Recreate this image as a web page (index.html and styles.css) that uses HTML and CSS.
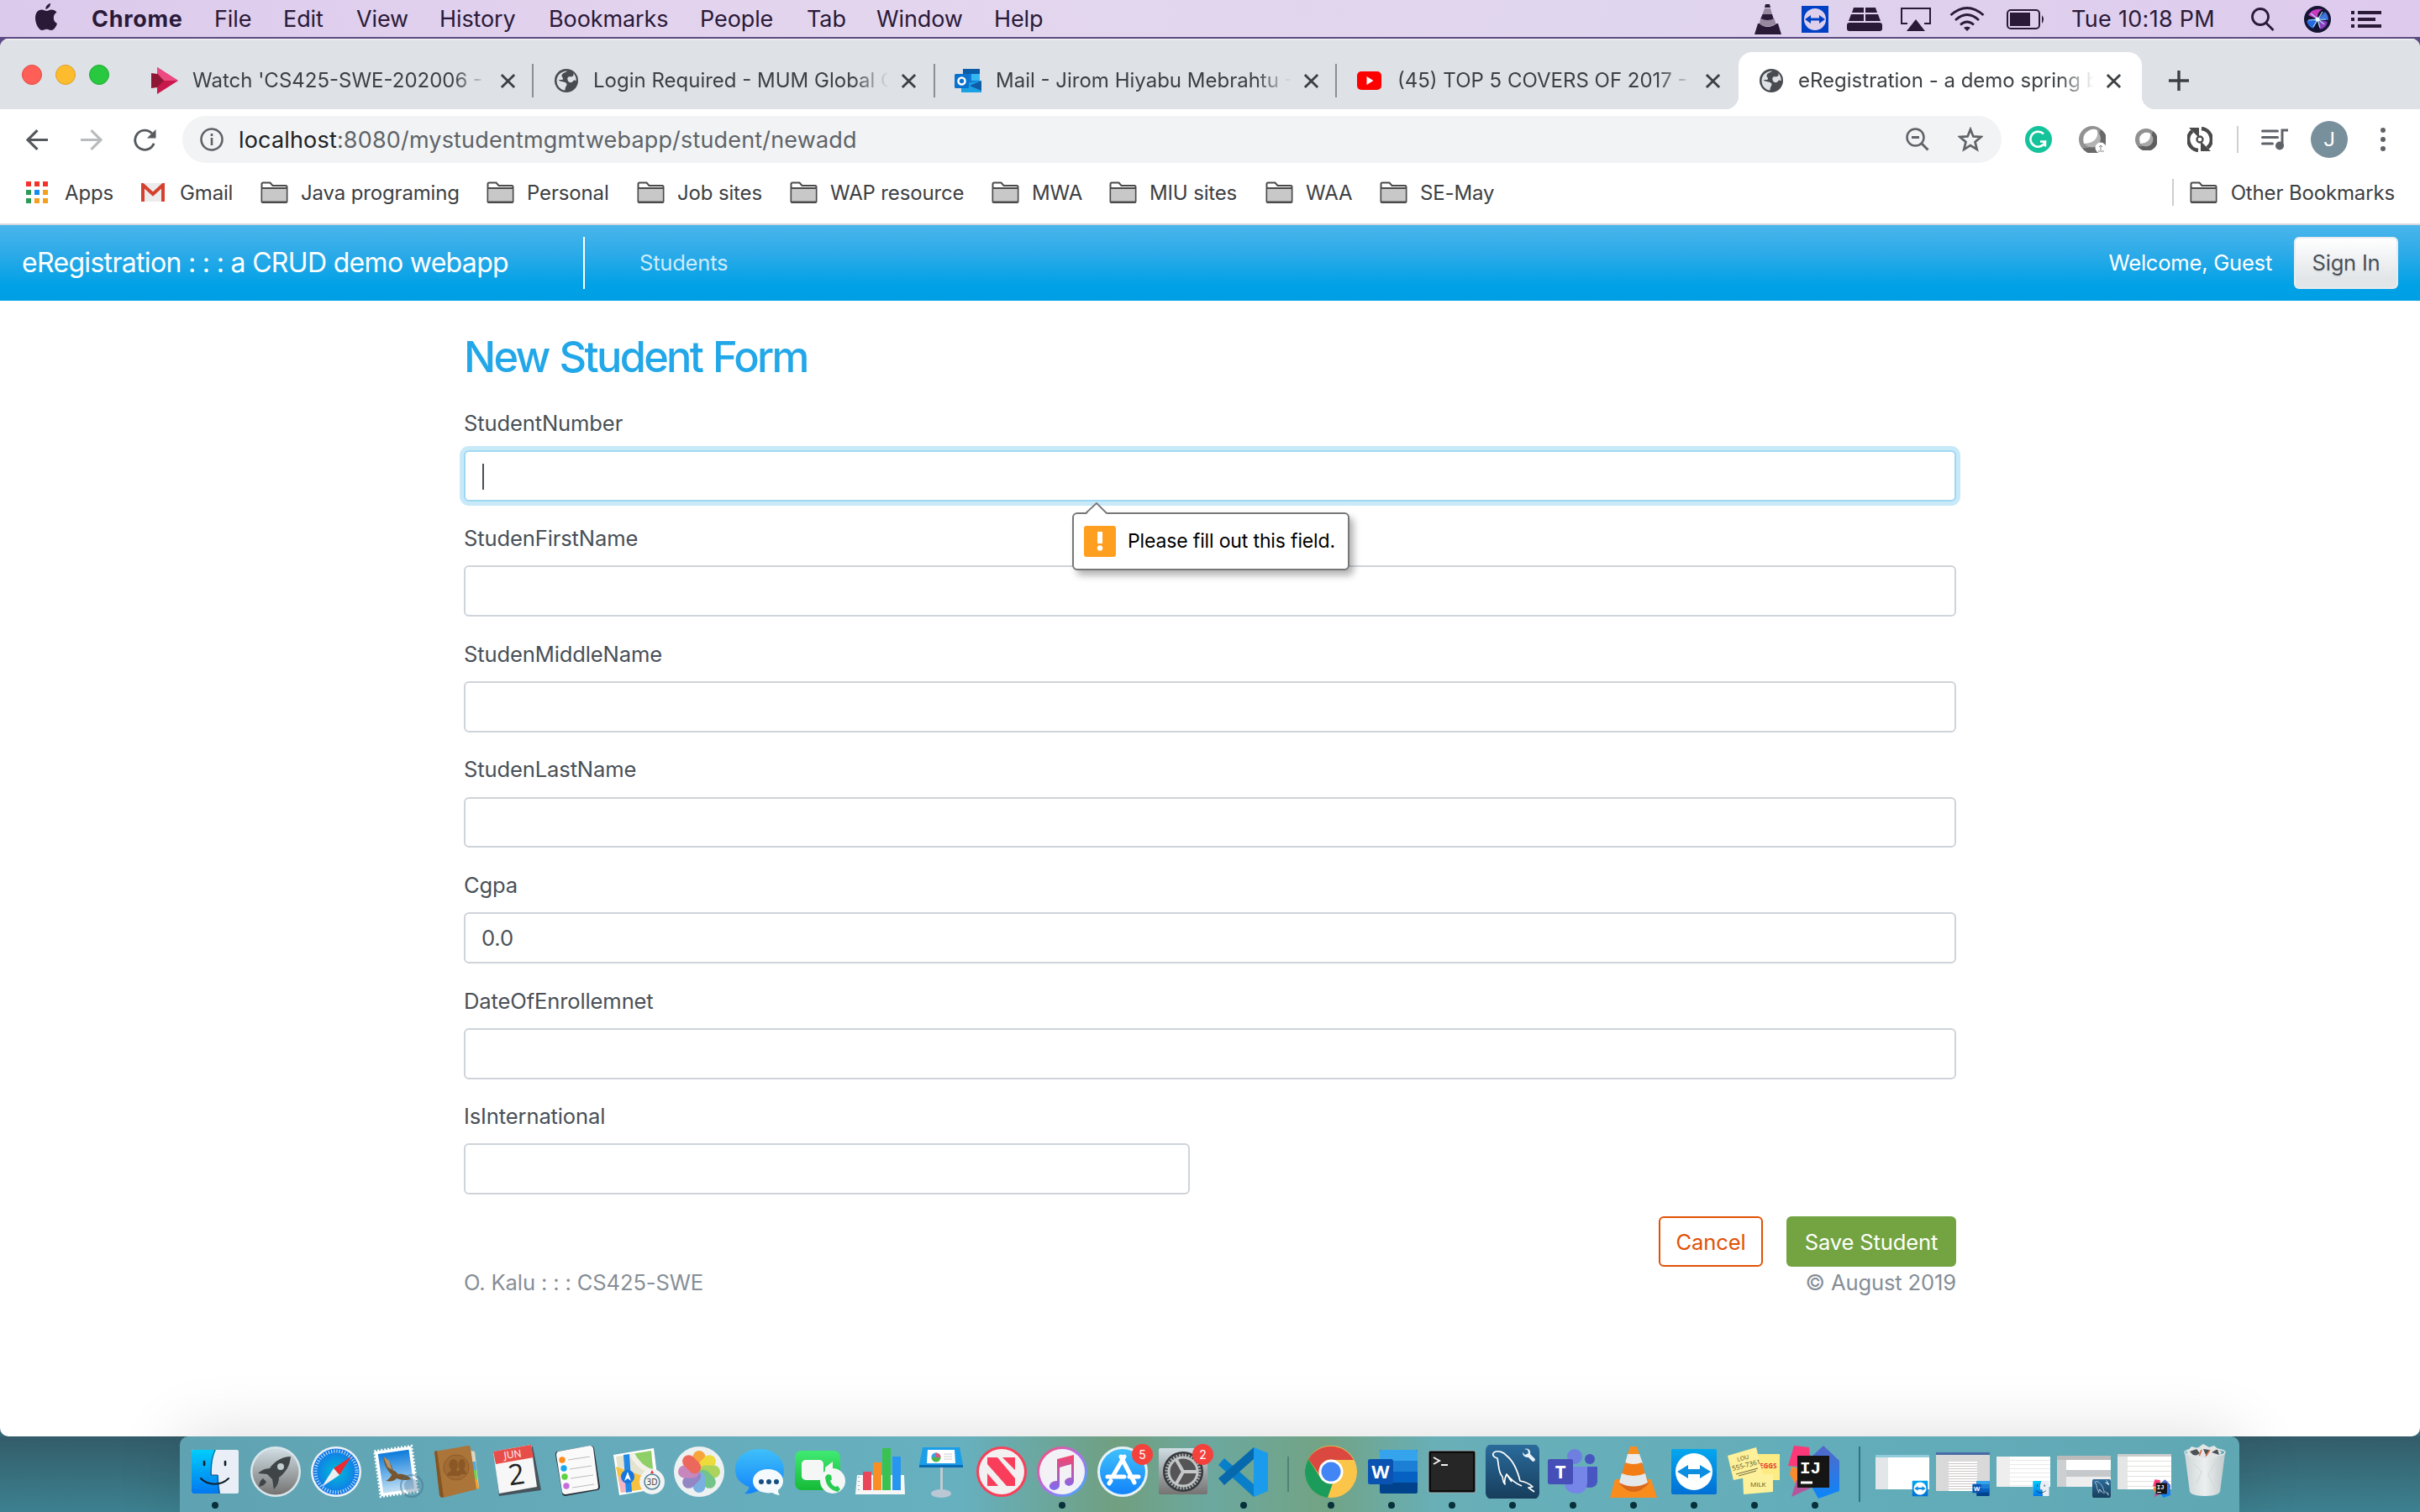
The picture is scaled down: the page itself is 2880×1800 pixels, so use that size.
FILE: index.html
```html
<!DOCTYPE html>
<html lang="en">
<head>
<meta charset="utf-8">
<title>eRegistration - a demo spring boot webapp</title>
<link rel="stylesheet" href="styles.css">
</head>
<body>
<svg class="sprite" aria-hidden="true">
  <symbol id="folder" viewBox="0 0 33 26"><path d="M1.500 24V3q0-1.500 1.500-1.500h8.500l3 3.500H30q1.500 0 1.500 1.500V24q0 1-1 1H2.500q-1 0-1-1z" fill="#fff" stroke="#4a4a4a" stroke-width="2"/><path d="M2.500 8.500h28V24h-28z" fill="#c8c8c8"/><path d="M2 8h29M2 24.500h29" stroke="#4a4a4a" stroke-width="2"/></symbol>
  <symbol id="globe" viewBox="0 0 28 28"><circle cx="14" cy="14" r="14" fill="#484c50"/><path d="M15 2.500c-2 2-6 2-6.500 5.500-.3 2 2 2 1.500 4-.5 1.500-3 1-5.500 1 2.500 2.500 6 2 8 3 2.500 1.200 2.500 3 1 5-1 1.500-1 3-1 4.500C7 25 2.500 20.500 2.500 14S8 2.500 15 2.500zM16.500 9.500c2-1 4 .5 5.500-1 1-1 .5-2.500 0-3.500 2.500 2 4 5.500 3.700 9.500-1.200-1.500-3-1.500-3.700 0-1 2-3.500 2-5 1s-2.500-4.800-.5-6z" fill="#dee1e6"/></symbol>
  <symbol id="close" viewBox="0 0 20 20"><path d="M2 2l16 16M18 2L2 18" stroke="#3c4043" stroke-width="3"/></symbol>
  <symbol id="finder" viewBox="0 0 64 64"><rect x="4" y="6" width="56" height="52" rx="2" fill="#e9eef7"/><path d="M6 6h27c-4 8-5 17-5 30h8c0 8 1 15 2 22H6q-2 0-2-2V8q0-2 2-2z" fill="url(#gFinder)"/><path d="M32 6c-4 9-5 18-5 30h8c0 8 1 15 2 22" fill="none" stroke="#1e4d77" stroke-width="1"/><path d="M19 20v4M44 20v4" stroke="#10202c" stroke-width="2.600" stroke-linecap="round"/><path d="M15 40c9 9 24 9 33 0" fill="none" stroke="#10202c" stroke-width="2" stroke-linecap="round"/></symbol>
  <symbol id="word" viewBox="0 0 64 64"><rect x="18" y="6" width="45" height="52" rx="2" fill="#00438c"/><path d="M18 8q0-2 2-2h41q2 0 2 2v11H18z" fill="#35a4ec"/><path d="M18 19h45v13H18z" fill="#1b7fd6"/><path d="M18 32h45v13H18z" fill="#0561c2"/><rect x="4" y="17" width="30" height="30" rx="2.500" fill="#0a53b3"/><text x="19" y="40" class="glyph" font-size="22" text-anchor="middle">W</text></symbol>
  <symbol id="viewer" viewBox="0 0 64 64"><rect x="5" y="5" width="54" height="54" rx="2" fill="url(#gTv)"/><circle cx="32" cy="32" r="22" fill="#fff"/><path d="M12 32l13-8v5h14v-5l13 8-13 8v-5H25v5z" fill="#0d8ee0"/></symbol>
  <symbol id="mysql" viewBox="0 0 64 64"><rect x="0" y="-1" width="64" height="66" rx="8" fill="url(#gSql)"/><path d="M10 9c5-3 12 0 15 4 9 7 13 18 16 30 6 1 11 3 15 7l-5 1 7 5M10 9c-3 3 0 6 4 7 2 9 1 17 6 22 1 3 0 6 3 9-1-4 0-8 2-12 4 5 10 11 18 14M25 35l6 9" fill="none" stroke="#fff" stroke-width="1.700" stroke-linejoin="round"/><path d="M46 5l4 1 1 4-4 2-3-3c0 5 4 6 7 6l5 5q3 0 3-3l-6-6c1-4-2-8-7-6z" fill="#e8f2f8"/></symbol>
  <symbol id="idea" viewBox="0 0 64 64"><path d="M7 1l18 2 2 24-27-2z" fill="#fb3878"/><path d="M4 26l18 5-12 18-8-14z" fill="#f88b2d"/><path d="M10 42l20 8-26 12z" fill="#b5569b"/><path d="M28 14L42 1l19 18v36L36 64l-8-14z" fill="url(#gIdea)"/><rect x="11" y="13" width="38" height="38" fill="#151515"/><text x="14" y="34" class="glyph mono" font-size="21">IJ</text><path d="M15 45h14" stroke="#fff" stroke-width="3"/></symbol>
  <defs>
    <linearGradient id="gFinder" x1="0" y1="0" x2="0" y2="1"><stop offset="0" stop-color="#00cdfb"/><stop offset="1" stop-color="#0078f0"/></linearGradient>
    <linearGradient id="gTv" x1="0" y1="0" x2="0" y2="1"><stop offset="0" stop-color="#04a7ee"/><stop offset="1" stop-color="#006fd6"/></linearGradient>
    <linearGradient id="gSql" x1="0" y1="0" x2="0" y2="1"><stop offset="0" stop-color="#2a6c9c"/><stop offset="1" stop-color="#173d5b"/></linearGradient>
    <linearGradient id="gIdea" x1="0" y1="0" x2="0" y2="1"><stop offset="0" stop-color="#5568c8"/><stop offset="1" stop-color="#0a86fb"/></linearGradient>
    <linearGradient id="gSilver" x1="0" y1="0" x2="0" y2="1"><stop offset="0" stop-color="#cfdde3"/><stop offset="1" stop-color="#757372"/></linearGradient>
    <linearGradient id="gSky" x1="0" y1="0" x2="0" y2="1"><stop offset="0" stop-color="#0c7bdc"/><stop offset="1" stop-color="#c2e0f3"/></linearGradient>
    <radialGradient id="gSafari"><stop offset="0" stop-color="#00bdd8"/><stop offset="1" stop-color="#1374e8"/></radialGradient>
    <linearGradient id="gBlue" x1="0" y1="0" x2="0" y2="1"><stop offset="0" stop-color="#3fc0fa"/><stop offset="1" stop-color="#1283fb"/></linearGradient>
    <linearGradient id="gGreen" x1="0" y1="0" x2="0" y2="1"><stop offset="0" stop-color="#40ea72"/><stop offset="1" stop-color="#16ba38"/></linearGradient>
    <linearGradient id="gMusic" x1="0" y1="0" x2="1" y2="1"><stop offset="0" stop-color="#fc4e63"/><stop offset=".5" stop-color="#b66bf0"/><stop offset="1" stop-color="#2cb8fb"/></linearGradient>
    <linearGradient id="gNote" x1="0" y1="0" x2="0" y2="1"><stop offset="0" stop-color="#f8446a"/><stop offset="1" stop-color="#7c6cf3"/></linearGradient>
    <linearGradient id="gTrash" x1="0" y1="0" x2="1" y2="0"><stop offset="0" stop-color="#d3d7d8"/><stop offset=".5" stop-color="#f1f2f2"/><stop offset="1" stop-color="#c6cbcc"/></linearGradient>
  </defs>
</svg>

<header class="menubar">
  <nav class="menus">
    <svg class="apple" viewBox="0 0 26 32"><path d="M18 0c.3 3-2.200 6.600-5.600 6.900C12 4 14.700.500 18 0zM21.800 17c0-3 1.500-5 3.700-6.300-1.500-2.200-3.800-3.200-6.200-3.200-2.600 0-4 1.400-5.800 1.400-1.900 0-3.500-1.400-6-1.400C3.300 7.500 0 11 0 17.500 0 24.500 4.500 32 8 32c2 0 3-1.300 5.500-1.300S17 32 19 32c3.200 0 6-4.500 7-8-2.800-1.200-4.200-4-4.200-7z"/></svg>
    <b class="t-app">Chrome</b><span>File</span><span>Edit</span><span>View</span><span>History</span><span>Bookmarks</span><span>People</span><span>Tab</span><span>Window</span><span>Help</span>
  </nav>
  <div class="status">
    <svg width="32" height="36" viewBox="0 0 32 36"><path d="M13 0h5l1 4h-7z"/><path d="M12 5h7l2 7H9.500z" fill="#97879f"/><path d="M9.500 12h11.500l2 6q-7.500 4-16 0z"/><path d="M7.500 17q8 4 16 0l2 6.500q-10 6-20 0z" fill="#97879f"/><path d="M4 23h1.500q10 8 21 0H28l4 13H0z"/></svg>
    <svg width="32" height="32" viewBox="0 0 32 32"><path d="M0 0h32v32H0z" fill="#0040c4"/><circle cx="16" cy="16" r="13" fill="#ded0ec"/><path d="M4 16l7-5v3.500h10V11l7 5-7 5v-3.500H11V21z" fill="#0040c4"/></svg>
    <svg width="42" height="28" viewBox="0 0 42 28"><path d="M8 0h12v6H6zM22 0h12l2 6H22zM5 8h15v8H2zM22 8h15l3 8H22z"/><rect y="18" width="42" height="10" rx="3"/></svg>
    <svg width="36" height="28" viewBox="0 0 36 28"><path d="M8 19H1V1h34v18h-7" fill="none" stroke="#2a1a38" stroke-width="2"/><path d="M18 14l11 14H7z"/></svg>
    <svg width="42" height="30" viewBox="0 0 42 30" class="waves"><path d="M1.500 10q19.500-17 39 0M7 16q14-13 28 0M13 21.500q8-7 16 0"/><path d="M17 25q4-2.500 8 0l-4 4z" class="solid"/></svg>
    <svg width="46" height="24" viewBox="0 0 46 24"><rect x="1" y="1" width="38" height="22" rx="4" fill="none" stroke="#2a1a38" stroke-width="2"/><path d="M4 4h24v16H4zM42 7q4 5 0 10z"/></svg>
    <span class="clock">Tue 10:18 PM</span>
    <svg width="30" height="28" viewBox="0 0 30 28" class="waves"><circle cx="12" cy="11" r="9.500"/><path d="M18.500 18l9 9"/></svg>
    <svg width="32" height="32" viewBox="0 0 32 32"><circle cx="16" cy="16" r="16" fill="#141433"/><path d="M5 11q5-9 17-7-7 3-6 12-7-3-11-5z" fill="#c63bc0"/><path d="M3 18q8-4 13-2l-5 11q-6-2-8-9z" fill="#2667df"/><path d="M16 16l9-9q4 4 4 10z" fill="#3f73dd"/><path d="M16 16l12 3q-2 8-9 9z" fill="#8d3bc1"/><path d="M8 9l16 13M22 7L11 25M5 17l21-1M16 16l3 10" stroke="#a5e3f2" stroke-width="1.200"/><circle cx="16" cy="16" r="2.500" fill="#e6fbff"/></svg>
    <svg width="36" height="20" viewBox="0 0 36 20"><path d="M0 0h4v4H0zM8 0h28v4H8zM0 8h4v4H0zM8 8h21v4H8zM0 16h4v4H0zM8 16h28v4H8z"/></svg>
  </div>
</header>

<main class="window">
  <div class="tabstrip">
    <div class="lights"><i class="red"></i><i class="amber"></i><i class="green"></i></div>
    <div class="tab">
      <svg viewBox="0 0 32 32"><path d="M7 0l25 16L7 32z" fill="#c9194c"/><path d="M7 0l25 16H15L7 7z" fill="#ec4a80"/><path d="M0 7l7 1 8 8-8 8-7 1z" fill="#8d1735"/></svg>
      <span class="title">Watch 'CS425-SWE-202006 - </span><svg class="x"><use href="#close"/></svg>
    </div>
    <div class="tab">
      <svg class="globe"><use href="#globe"/></svg>
      <span class="title">Login Required - MUM Global Co</span><svg class="x"><use href="#close"/></svg>
    </div>
    <div class="tab">
      <svg viewBox="0 0 32 32"><path d="M10 2h20v28H10z" fill="#0f78d4"/><path d="M10 2h20v6H10z" fill="#0a5ba8"/><path d="M20 8h10v8H20z" fill="#35b8f1"/><path d="M8 20l24-4v14H8z" fill="#1ba0e4"/><path d="M18 22l14-6v12z" fill="#0f5ca5"/><rect y="8" width="17" height="17" rx="1.500" fill="#0a72cd"/><circle cx="8.500" cy="16.500" r="4" fill="none" stroke="#fff" stroke-width="2.500"/></svg>
      <span class="title">Mail - Jirom Hiyabu Mebrahtu - O</span><svg class="x"><use href="#close"/></svg>
    </div>
    <div class="tab">
      <svg viewBox="0 0 32 32"><rect x="1" y="5" width="29" height="22" rx="5" fill="#f00"/><path d="M12.500 11l8 5-8 5z" fill="#fff"/></svg>
      <span class="title">(45) TOP 5 COVERS OF 2017 - Y</span><svg class="x"><use href="#close"/></svg>
    </div>
    <div class="tab active">
      <svg class="globe"><use href="#globe"/></svg>
      <span class="title">eRegistration - a demo spring bo</span><svg class="x"><use href="#close"/></svg>
    </div>
    <svg class="plus" viewBox="0 0 24 24"><path d="M12 0v24M0 12h24" stroke="#3c4043" stroke-width="3.400"/></svg>
  </div>

  <div class="toolbar">
    <svg class="nav" viewBox="0 0 26 26"><path d="M25 13H3M13 2L2 13l11 11" fill="none" stroke="#55595d" stroke-width="3"/></svg>
    <svg class="nav" viewBox="0 0 26 26"><path d="M1 13h22M13 2l11 11-11 11" fill="none" stroke="#b9bbbd" stroke-width="3"/></svg>
    <svg class="nav" viewBox="0 0 28 28"><path d="M25 18.500A12 12 0 1 1 22.500 6" fill="none" stroke="#55595d" stroke-width="3"/><path d="M27.500 1v11h-11z" fill="#55595d"/></svg>
    <div class="omnibox">
      <svg width="28" height="28" viewBox="0 0 28 28"><circle cx="14" cy="14" r="12.500" fill="none" stroke="#5f6368" stroke-width="2.600"/><path d="M14 12v9M14 7v3" stroke="#5f6368" stroke-width="2.600"/></svg>
      <span class="url"><b>localhost</b>:8080/mystudentmgmtwebapp/student/newadd</span>
      <svg width="28" height="28" viewBox="0 0 28 28"><circle cx="11.500" cy="11.500" r="10" fill="none" stroke="#606468" stroke-width="2.500"/><path d="M7 11.500h9M19 19l7.500 7.500" stroke="#606468" stroke-width="3"/></svg>
      <svg class="star" width="30" height="30" viewBox="0 0 30 30"><path d="M15 3l3.400 8.400 9.100.6-7 5.900 2.200 9L15 22l-7.700 4.900 2.200-9-7-5.900 9.100-.6z" fill="none" stroke="#606468" stroke-width="2.700"/></svg>
    </div>
    <div class="extensions">
      <svg width="32" height="32" viewBox="0 0 32 32"><circle cx="16" cy="16" r="16" fill="#15c39a"/><path d="M22 9.500a9 9 0 1 0 2 9h-6m6 0v6" fill="none" stroke="#fff" stroke-width="2.500"/></svg>
      <svg width="32" height="32" viewBox="0 0 32 32"><circle cx="16" cy="16" r="16" fill="#929292"/><path d="M26 4a16 16 0 1 1-22 22q15 3 22-22z" fill="#696969"/><circle cx="15.500" cy="15" r="10.500" fill="#b4b4b4"/><path d="M22 5q2 15-16 16Q3 9 15 4q4-1 7 1z" fill="#fff"/><circle cx="26" cy="26" r="6.500" fill="#fff"/><path d="M26 29v-6m-2 2l2-2 2 2M23 30h7" fill="none" stroke="#888"/></svg>
      <svg width="26" height="26" viewBox="0 0 26 26"><circle cx="13" cy="13" r="13" fill="#909090"/><path d="M21 3A13 13 0 1 1 3 21q14 3 18-18z" fill="#5e5e5e"/><circle cx="13" cy="13" r="8.500" fill="#a8a8a8"/><path d="M18 6q1 11-12 12Q3 8 11 5q4-1 7 1z" fill="#fff"/></svg>
      <svg width="30" height="30" viewBox="0 0 30 30"><path d="M13 28A13 13 0 0 1 6 5M17 2a13 13 0 0 1 7 23" fill="none" stroke="#4a4a4a" stroke-width="4.500"/><path d="M2 1h12v12zM28 29H16V17z" fill="#4a4a4a"/><circle cx="15" cy="15" r="3.500" fill="none" stroke="#4a4a4a" stroke-width="2.300"/></svg>
      <i class="rule"></i>
      <svg width="33" height="26" viewBox="0 0 33 26"><path d="M1.500 3h18M1.500 10.500h18M1.500 18h12" stroke="#5f6368" stroke-width="3" stroke-linecap="round"/><path d="M25 20V2h7" fill="none" stroke="#5f6368" stroke-width="3"/><circle cx="22" cy="20.500" r="5" fill="#5f6368"/></svg>
      <span class="avatar">J</span>
      <svg width="6" height="28" viewBox="0 0 6 28" fill="#5f6368"><circle cx="3" cy="3" r="3"/><circle cx="3" cy="14" r="3"/><circle cx="3" cy="25" r="3"/></svg>
    </div>
  </div>

  <div class="bookmarks">
    <a><svg width="26" height="26" viewBox="0 0 26 26"><path d="M0 0h6v6H0zM10 0h6v6h-6zM20 0h6v6h-6z" fill="#f4322c"/><path d="M0 10h6v6H0zM0 20h6v6H0z" fill="#2e9a58"/><path d="M10 10h6v6h-6z" fill="#1a8cf0"/><path d="M20 10h6v6h-6zM10 20h6v6h-6zM20 20h6v6h-6z" fill="#f49f1e"/></svg><span>Apps</span></a>
    <a><svg width="28" height="22" viewBox="0 0 28 22"><path d="M0 0h28v22H0z" fill="#ececec"/><path d="M2 22V2l12 11L26 2v20" fill="none" stroke="#d5402f" stroke-width="4"/></svg><span>Gmail</span></a>
    <a><svg class="fold"><use href="#folder"/></svg><span>Java programing</span></a>
    <a><svg class="fold"><use href="#folder"/></svg><span>Personal</span></a>
    <a><svg class="fold"><use href="#folder"/></svg><span>Job sites</span></a>
    <a><svg class="fold"><use href="#folder"/></svg><span>WAP resource</span></a>
    <a><svg class="fold"><use href="#folder"/></svg><span>MWA</span></a>
    <a><svg class="fold"><use href="#folder"/></svg><span>MIU sites</span></a>
    <a><svg class="fold"><use href="#folder"/></svg><span>WAA</span></a>
    <a><svg class="fold"><use href="#folder"/></svg><span>SE-May</span></a>
    <a class="other"><svg class="fold"><use href="#folder"/></svg><span>Other Bookmarks</span></a>
  </div>

  <div class="navbar">
    <a class="brand">eRegistration : : : a CRUD demo webapp</a>
    <i class="split"></i>
    <a class="link">Students</a>
    <span class="welcome">Welcome, Guest</span>
    <a class="signin">Sign In</a>
  </div>

  <div class="page">
    <h1>New Student Form</h1>
    <div class="group"><label>StudentNumber</label><div class="input focus"><i class="caret"></i>
      <div class="bubble"><svg class="tip" viewBox="0 0 28 15"><path d="M0 15L13 1l13 14z" fill="#fff"/><path d="M0 13L13 1l12 12" fill="none" stroke="#777" stroke-width="1.800"/></svg><svg width="38" height="37" viewBox="0 0 38 37"><rect width="38" height="37" rx="3" fill="#ff9f1f"/><path d="M19 7v14" stroke="#fff" stroke-width="6"/><circle cx="19" cy="26.500" r="3.200" fill="#fff"/></svg><span>Please fill out this field.</span></div></div></div>
    <div class="group"><label>StudenFirstName</label><div class="input"></div></div>
    <div class="group"><label>StudenMiddleName</label><div class="input"></div></div>
    <div class="group"><label>StudenLastName</label><div class="input"></div></div>
    <div class="group"><label>Cgpa</label><div class="input">0.0</div></div>
    <div class="group"><label>DateOfEnrollemnet</label><div class="input"></div></div>
    <div class="group"><label>IsInternational</label><div class="input half"></div></div>
    <div class="actions"><a class="cancel">Cancel</a><a class="save">Save Student</a></div>
    <footer><span>O. Kalu : : : CS425-SWE</span><span class="date">© August 2019</span></footer>
  </div>
</main>

<section class="desktop">
  <div class="dock">
    <div class="app run"><svg><use href="#finder"/></svg></div>
    <div class="app"><svg viewBox="0 0 64 64"><circle cx="32" cy="32" r="30" fill="#dbe7ec"/><circle cx="32" cy="32" r="27.500" fill="url(#gSilver)"/><path d="M50 14c-10 0-20 6-25 14-5 0-10 2-14 6l11 1 6 6c1 5 1 8 2 12 4-4 6-9 6-14 8-6 13-14 14-25zM17 40c-4 3-4 6-5 10 4-1 7-2 9-6z" fill="#3f4447"/><circle cx="38" cy="26" r="4" fill="#c3cdd0"/></svg></div>
    <div class="app"><svg viewBox="0 0 64 64"><circle cx="32" cy="32" r="30" fill="#eef3f6"/><circle cx="32" cy="32" r="27.500" fill="url(#gSafari)"/><circle cx="32" cy="32" r="24.500" fill="none" stroke="#d5ecf8" stroke-width="4" stroke-dasharray="1 2.200"/><path d="M50 14L29 28l7 8z" fill="#f02a2e"/><path d="M15 50l14-22 7 8z" fill="#eceef0"/></svg></div>
    <div class="app"><svg viewBox="0 0 64 64"><g transform="rotate(-8 32 32)"><rect x="9" y="4" width="45" height="55" fill="none" stroke="#fff" stroke-width="2.500" stroke-dasharray="2 2"/><rect x="9.500" y="4.500" width="44" height="54" fill="#fff"/><rect x="13" y="8" width="37" height="47" fill="url(#gSky)"/><path d="M19 12c5 4 8 10 9 18 3 1 4 3 5 5 6 0 12 3 15 8-6 1-12 0-17-3-4 3-9 3-13 1 4-1 6-4 8-6-5-6-8-14-7-23z" fill="#76552f"/><path d="M19 12l6 6 2 11-5-4z" fill="#b7946a"/></g><circle cx="50" cy="49" r="13" fill="none" stroke="#446e8b" stroke-width="2" opacity=".5"/><circle cx="50" cy="49" r="9" fill="#446e8b" opacity=".35"/></svg></div>
    <div class="app"><svg viewBox="0 0 64 64"><path d="M48 7l5 1 5 43-6 1z" fill="#ded6bf"/><path d="M49 20h5l1 10h-5z" fill="#4cabdc"/><path d="M50 30h5l1 11h-5z" fill="#6fd34a"/><path d="M51 41h5l2 11-6 1z" fill="#f0a42a"/><path d="M5 8l40-7q3 0 3 3l7 49-40 10q-3 0-3-3z" fill="#ab7439"/><path d="M5 8l3-1 8 55-2 1q-2 0-3-3z" fill="#845423"/><circle cx="31" cy="27" r="15" fill="#a16b33" stroke="#8d5b2a"/><path d="M20 37c0-4 4-5 5-7-5-5-2-13 3-13 4 0 7 8 3 13 1 2 5 3 5 7zM30 35c0-3 5-4 5-6-3-5-1-12 3-12 4 1 5 8 2 12 1 2 3 3 3 6z" fill="#8a5826"/></svg></div>
    <div class="app"><svg viewBox="0 0 64 64"><path d="M4 10l46-8 10 52-50 7z" fill="#46535b"/><path d="M3 8l45-8 7 50-45 8z" fill="#f7f7f7"/><path d="M3 8l45-8 3 15-45 8z" fill="#e84e49"/><g transform="rotate(-8 32 32)"><text x="29" y="15" class="glyph thin" font-size="12" text-anchor="middle">JUN</text><text x="30" y="47" class="thin" font-size="34" text-anchor="middle" fill="#222">2</text></g></svg></div>
    <div class="app"><svg viewBox="0 0 64 64"><path d="M7 8l40-7q3 0 4 3l7 46q0 3-3 4l-38 7q-4 0-4-4L5 12q0-4 2-4z" fill="#293136"/><path d="M8 8l38-7q3 0 4 3l6 46q0 3-3 3l-36 6q-3 0-4-3L6 12q0-3 2-4z" fill="#fafafa"/><path d="M20 18l26-4M22 29l26-4M23 40l27-4M25 51l26-4" stroke="#bbb"/><circle cx="13" cy="18" r="3.700" fill="#fb8c1c"/><circle cx="15" cy="28" r="3.700" fill="#16a9f2"/><circle cx="16" cy="38" r="3.700" fill="#5ed13f"/><circle cx="18" cy="49" r="3.700" fill="#c66ddb"/></svg></div>
    <div class="app"><svg viewBox="0 0 64 64"><path d="M2 12l48-8 6 48-47 8z" fill="#fff"/><path d="M5 14l42-7 5 43-41 7z" fill="#e4e3cf"/><path d="M23 11l24-4 2 24q-20-2-26-20z" fill="#8fcf68"/><path d="M5 26l35 12 4 14-33 5z" fill="#f9c140"/><path d="M8 37l12 4 3 14-12 2z" fill="#f3b4c5"/><path d="M14 12l7-1 3 45-7 1z" fill="#2389e7"/><path d="M24 11q10 18 25 21" fill="none" stroke="#f3f0e7" stroke-width="6"/><circle cx="19" cy="38" r="8" fill="#1476e0"/><path d="M19 32l4 11-4-3-4 3z" fill="#fff"/><circle cx="48" cy="44" r="15" fill="#f3f3f3"/><circle cx="48" cy="44" r="9" fill="none" stroke="#4b8396" stroke-width="1.500"/><path d="M48 30l-2 4h4z" fill="#e33"/><text x="48" y="48" font-size="10" class="thin" text-anchor="middle" fill="#333">3D</text></svg></div>
    <div class="app"><svg viewBox="0 0 64 64"><circle cx="32" cy="32" r="30" fill="#eef1f1"/><g opacity=".88"><rect x="24.500" y="7" width="15" height="25" rx="7.500" fill="#fa9a25"/><rect x="24.500" y="7" width="15" height="25" rx="7.500" fill="#efd923" transform="rotate(45 32 32)"/><rect x="24.500" y="7" width="15" height="25" rx="7.500" fill="#a4cf48" transform="rotate(90 32 32)"/><rect x="24.500" y="7" width="15" height="25" rx="7.500" fill="#62be79" transform="rotate(135 32 32)"/><rect x="24.500" y="7" width="15" height="25" rx="7.500" fill="#6aa8df" transform="rotate(180 32 32)"/><rect x="24.500" y="7" width="15" height="25" rx="7.500" fill="#8678bf" transform="rotate(225 32 32)"/><rect x="24.500" y="7" width="15" height="25" rx="7.500" fill="#c278b5" transform="rotate(270 32 32)"/><rect x="24.500" y="7" width="15" height="25" rx="7.500" fill="#ed5648" transform="rotate(315 32 32)"/></g></svg></div>
    <div class="app"><svg viewBox="0 0 64 64"><path d="M32 5c17 0 29 11 29 26S49 54 32 54c-6 3-12 5-18 4 4-3 6-6 5-8C9 46 3 40 3 30 3 15 15 5 32 5z" fill="url(#gBlue)"/><path d="M42 29c10 0 18 6 18 14 0 5-3 9-6 11 0 2 0 3 2 6-4 0-7-2-9-3-12 2-23-4-23-14 0-8 8-14 18-14z" fill="#f4fafd"/><g fill="#154f82"><circle cx="34" cy="44" r="3"/><circle cx="43" cy="44" r="3"/><circle cx="52" cy="44" r="3"/></g></svg></div>
    <div class="app"><svg viewBox="0 0 64 64"><rect x="2" y="7" width="54" height="47" rx="8" fill="url(#gGreen)"/><rect x="10" y="18" width="26" height="24" rx="5" fill="#f5f7f6"/><path d="M38 27l9-7v20l-9-6z" fill="#f5f7f6"/><circle cx="47" cy="43" r="15" fill="#f5f7f6"/><path d="M41 35l4 1 1 5-2 2q2 5 6 7l3-1 3 4-3 3q-14-3-15-18z" fill="#27cc50"/></svg></div>
    <div class="app"><svg viewBox="0 0 64 64"><path d="M4 36h56l1 23H2z" fill="#f7f7f7"/><path d="M6 38v18" stroke="#aaa" stroke-width="2" stroke-dasharray="1 4"/><path d="M11 32h10v22H11z" fill="#e94659"/><path d="M23 21h10v33H23z" fill="#f98e25"/><path d="M34 4h10v50H34z" fill="#3ac250"/><path d="M46 14h10v40H46z" fill="#2796f0"/></svg></div>
    <div class="app"><svg viewBox="0 0 64 64"><path d="M31 26h3v30h-3z" fill="#c2cbd1"/><ellipse cx="32" cy="58" rx="12" ry="5" fill="#b9c8d4"/><path d="M10 3h44l4 21H6z" fill="#1a9ee8"/><path d="M6 24h52v3H6z" fill="#0a6ab4"/><path d="M16 6h32l1 16H15z" fill="#fff"/><circle cx="26" cy="15" r="5.500" fill="#4db54c"/><path d="M26 9.500v5.500h-5.500a5.500 5.500 0 0 1 5.500-5.500z" fill="#38a2e6"/><path d="M26 15V9.500a5.500 5.500 0 0 1 5.500 5.500z" fill="#e05683"/><path d="M35 11h10M35 14h10M35 17h10" stroke="#ccc"/></svg></div>
    <div class="app"><svg viewBox="0 0 64 64"><circle cx="32" cy="32" r="30" fill="#f8405a"/><circle cx="32" cy="32" r="27" fill="#f2f0f1"/><path d="M15 15h12l21 25v9H38L15 23zM33 15h15v15zM15 34l13 15H15z" fill="#fa3d5b"/></svg></div>
    <div class="app run"><svg viewBox="0 0 64 64"><circle cx="32" cy="32" r="30" fill="url(#gMusic)"/><circle cx="32" cy="32" r="27" fill="#f2f1f5"/><path d="M26 17l20-5v31q0 5-6 6-5-1-5-5 1-5 8-5V23l-14 4v21q0 5-7 6-6-1-5-6 2-5 9-5z" fill="url(#gNote)"/></svg></div>
    <div class="app"><svg viewBox="0 0 64 64"><circle cx="32" cy="32" r="30" fill="#e7f2f7"/><circle cx="32" cy="32" r="27" fill="url(#gBlue)"/><path d="M34 14L20 38M30 14l16 31M14 38h20M40 38h11M18 43l-2 3" stroke="#fff" stroke-width="5" stroke-linecap="round"/></svg><b class="badge">5</b></div>
    <div class="app"><svg viewBox="0 0 64 64"><rect x="3" y="4" width="58" height="55" rx="2" fill="url(#gSilver)"/><circle cx="32" cy="32" r="24" fill="#35393b"/><circle cx="32" cy="32" r="19" fill="none" stroke="#a5a9ab" stroke-width="5" stroke-dasharray="2 1.500"/><circle cx="32" cy="32" r="17" fill="#555" stroke="#c2c5c6" stroke-width="3"/><path d="M32 32H48M32 32l-8-14M32 32l-8 14" stroke="#c6c8c9" stroke-width="4"/></svg><b class="badge">2</b></div>
    <div class="app run"><svg viewBox="0 0 64 64"><path d="M44 3v59L2 24l7-8 35 31z" fill="#0a7fc9"/><path d="M44 3L2 40l7 8 35-31z" fill="#0668ad"/><path d="M44 3l17 7v45l-17 7z" fill="#1a9bec"/></svg></div>
    <i class="sep short"></i>
    <div class="app run"><svg viewBox="0 0 64 64"><circle cx="32" cy="32" r="31" fill="#fbc549"/><path d="M5 17a31 31 0 0 1 54 1H32L20 38z" fill="#db4840"/><path d="M5 17l15 23q5 7 14 6l-6 17A31 31 0 0 1 5 17z" fill="#1c9c5a"/><circle cx="32" cy="32" r="14.500" fill="#fff"/><circle cx="32" cy="32" r="11.500" fill="#4285f4"/></svg></div>
    <div class="app run"><svg><use href="#word"/></svg></div>
    <div class="app run"><svg viewBox="0 0 64 64"><rect x="4" y="7" width="56" height="50" rx="2" fill="#0b0b0b" stroke="#9db0b4"/><rect x="7" y="10" width="50" height="44" fill="#262626"/><path d="M10 15l7 4-7 4M19 24h8" fill="none" stroke="#f0f0f0" stroke-width="2"/></svg></div>
    <div class="app run"><svg><use href="#mysql"/></svg></div>
    <div class="app run"><svg viewBox="0 0 64 64"><circle cx="34" cy="14" r="9" fill="#6f7fe0"/><circle cx="52" cy="17" r="6" fill="#4755c0"/><path d="M42 26h19v18q-1 7-9 7-7 0-10-5z" fill="#4856c1"/><path d="M22 26h27v19q-1 13-13 13-14-1-14-13z" fill="#7585e8"/><rect x="2" y="17" width="30" height="30" rx="2.500" fill="#464fb8"/><text x="17" y="40" class="glyph" font-size="22" text-anchor="middle">T</text></svg></div>
    <div class="app run"><svg viewBox="0 0 64 64"><path d="M10 41h43l7 22H4z" fill="#f88d1e"/><path d="M15 46q17 20 35 0l-4-12H19z" fill="#db681b"/><path d="M28 2h8l3 9H25z" fill="#f78f20"/><path d="M25 11h14l4 11q-11 4-21 0z" fill="#ececec"/><path d="M22 21q10 4 20 0l4 14q-14 5-28 0z" fill="#f27d17"/><path d="M18 34q14 6 28 0l3 11q-17 9-34 0z" fill="#e5e8ea"/></svg></div>
    <div class="app run"><svg><use href="#viewer"/></svg></div>
    <div class="app run"><svg viewBox="0 0 64 64"><path d="M32 11h30v31H32z" fill="#fdec83"/><path d="M18 35h36v21l-35 3z" fill="#fdf29b"/><g font-size="8" class="thin" fill="#565226"><text x="38" y="28" fill="#df3c2e" font-weight="700">EGGS</text><path d="M0 13l34-10 8 32-35 7z" fill="#fff19a"/><text x="12" y="20" font-size="7" transform="rotate(-14 12 20)">LOU</text><text x="6" y="31" transform="rotate(-14 6 31)">555-7361</text><text x="27" y="50">MILK</text></g><path d="M10 35l26-7M13 37l21-6" stroke="#6c6840"/></svg></div>
    <div class="app run"><svg><use href="#idea"/></svg></div>
    <i class="sep"></i>
    <div class="mini"><div class="shot s1"></div><svg><use href="#viewer"/></svg></div>
    <div class="mini"><div class="shot s2"></div><svg><use href="#word"/></svg></div>
    <div class="mini"><div class="shot s3"></div><svg><use href="#finder"/></svg></div>
    <div class="mini"><div class="shot s4"></div><svg><use href="#mysql"/></svg></div>
    <div class="mini"><div class="shot s5"></div><svg><use href="#idea"/></svg></div>
    <div class="app trash"><svg viewBox="0 0 64 64"><path d="M10 9l6-7 7 2 7-5 7 4 6-2 9 8-8 8H16z" fill="#e4e6e6"/><path d="M14 8l8-3 4 5-6 4zM30 5l7 1-3 8zM40 9l7-4 2 7z" fill="#4c5154"/><path d="M28 6l-3 8M38 6l-6 9" stroke="#d0653f" stroke-width="1.500"/><path d="M8 10q24 11 48 0l-6 46q-3 5-18 5t-18-5z" fill="url(#gTrash)" opacity=".96"/><ellipse cx="32" cy="9" rx="24" ry="5" fill="none" stroke="#dfe5e6" stroke-width="1.500"/><path d="M18 22l10 10-6 14M44 20l-8 16 8 16" fill="none" stroke="#d3d6d7"/></svg></div>
  </div>
</section>
</body>
</html>
```
FILE: styles.css
```css
* { box-sizing: border-box; }
html, body { margin: 0; }
body { width: 2880px; height: 1800px; overflow: hidden; display: grid; grid-template-rows: 46px 1664px 90px; font-family: Inter, "Liberation Sans", sans-serif; font-size: 25.6px; color: #495057; background: linear-gradient(#5b4a86 0 60px, #366777 1690px); }
svg { display: block; flex: none; }
i { font-style: normal; }
.sprite { position: absolute; width: 0; height: 0; }
.glyph { fill: #fff; font-weight: 700; font-family: "Open Sans", sans-serif; }
.glyph.mono { font-family: "Liberation Mono", monospace; }
.thin { font-weight: 400; font-family: "Open Sans", sans-serif; }

/* system menu bar */
.menubar { display: flex; justify-content: space-between; height: 46px; border-bottom: 2px solid #5c4a80; background: linear-gradient(90deg, #dccaec, #e4d5ee 35%, #e0d6ee 65%, #decaed); color: #2a1a38; fill: #2a1a38; font-size: 27px; line-height: 45px; white-space: nowrap; }
.menus { display: grid; grid-template-columns: 67px 146px 82px 87px 99px 130px 180px 127px 83px 140px 100px; padding-left: 42px; letter-spacing: -.1px; }
.menus .apple { width: 26px; height: 32px; margin-top: 4px; }
.t-app { letter-spacing: .7px; }
.clock { letter-spacing: .3px; }
.status { display: grid; grid-template-columns: 56px 54px 64px 58px 68px 77px 213px 64px 56px 82px; align-items: center; height: 44px; }
.waves { fill: none; stroke: #2a1a38; stroke-width: 2.800; }
.waves .solid { fill: #2a1a38; stroke: none; }

/* browser window */
.window { display: flex; flex-direction: column; background: #fff; border-radius: 10px; overflow: hidden; }
.tabstrip { flex: none; height: 84px; display: flex; background: #dee1e6; padding-left: 26px; box-shadow: inset 0 2px #eceef0; color: #3c4043; font-size: 24px; }
.lights { display: flex; gap: 16px; width: 131px; padding-top: 31px; }
.lights i { width: 24px; height: 24px; border-radius: 50%; }
.red { background: #ff5f57; border: 1px solid #e2483f; }
.amber { background: #fdbc2e; border: 1px solid #dfa023; }
.green { background: #28c840; border: 1px solid #1eab2e; }
.tab { position: relative; display: flex; align-items: center; width: 478px; height: 68px; margin-top: 16px; padding-left: 23px; }
.tab > svg:first-child { width: 32px; height: 32px; margin-right: 17px; }
.tab > svg.globe:first-child { width: 28px; height: 28px; margin: 0 18px 0 2px; }
.tab .title { width: 352px; margin-right: 14px; padding-bottom: 1px; overflow: hidden; white-space: nowrap; -webkit-mask-image: linear-gradient(90deg, #000 88%, transparent); mask-image: linear-gradient(90deg, #000 88%, transparent); }
.tab .x { width: 19px; height: 19px; }
.tab:nth-child(-n+5) { background: linear-gradient(#8b8e93, #8b8e93) right 0 center / 2px 40px no-repeat; }
.tab:nth-child(5) { background: none; }
.tab.active { width: 480px; background: #fff; border-radius: 16px 16px 0 0; }
.tab.active::before, .tab.active::after { content: ""; position: absolute; bottom: 0; width: 16px; height: 16px; }
.tab.active::before { left: -16px; background: radial-gradient(circle at 0 0, transparent 16px, #fff 16.500px); }
.tab.active::after { right: -16px; background: radial-gradient(circle at 100% 0, transparent 16px, #fff 16.500px); }
.plus { width: 24px; height: 24px; margin: 38px 0 0 32px; }

.toolbar { flex: none; height: 72px; display: flex; align-items: center; padding-left: 31px; }
.nav { width: 27px; height: 27px; margin-right: 37px; }
.omnibox { width: 2165px; height: 56px; margin-left: -6px; padding: 0 22px 0 21px; display: flex; align-items: center; border-radius: 28px; background: #f1f3f4; font-size: 27px; letter-spacing: .17px; color: #5f6368; }
.url { flex: 1; margin-left: 18px; }
.url b { font-weight: 400; color: #202124; }
.star { margin-left: 34px; }
.extensions { display: grid; grid-template-columns: 64px 67px 62px 59px 29px 59px 83px 10px; align-items: center; margin-left: 28px; }
.rule { width: 2px; height: 32px; background: #cfcfd1; }
.avatar { width: 44px; height: 44px; border-radius: 50%; background: #78909c; color: #fff; font: 24px/44px Roboto, sans-serif; text-align: center; }

.bookmarks { flex: none; height: 66px; display: grid; grid-template-columns: 137px 142px 269px 179px 182px 240px 140px 186px 136px 200px 1fr; padding: 0 30px 10px 31px; color: #3c4043; font-size: 24px; letter-spacing: -.15px; border-bottom: 2px solid #d5d8dc; white-space: nowrap; }
.bookmarks a { display: flex; align-items: center; }
.bookmarks .fold { width: 33px; height: 26px; }
.bookmarks span { margin-left: 15px; }
.bookmarks a:first-child span { margin-left: 20px; }
.bookmarks a:nth-child(2) span { margin-left: 18px; }
.bookmarks .other { justify-self: end; }
.bookmarks .other span { margin-left: 16px; }
.other::before { content: ""; width: 2px; height: 32px; background: #cfcfd1; margin-right: 19px; }

/* application navbar */
.navbar { flex: none; height: 90px; display: flex; align-items: center; padding: 0 26px; background: linear-gradient(#4ab5eb, #2aaae8 40%, #00a1e6 80%, #009fe5); color: #fff; letter-spacing: -.25px; white-space: nowrap; }
.brand { width: 668px; padding-bottom: 1px; font-size: 32px; letter-spacing: -.68px; }
.split { width: 2px; height: 62px; background: #fff; }
.link { flex: 1; margin-left: 65px; padding-bottom: 2px; color: #cdebfa; }
.welcome { padding-bottom: 2px; }
.signin { width: 124px; height: 62px; margin-left: 26px; text-align: center; line-height: 57px; color: #495057; border: 2px solid #e9ecef; border-radius: 6px; background: linear-gradient(#fff, #e3e6e9 80%); text-shadow: 0 2px 1px rgba(0,0,0,.06); }

/* form page */
.page { width: 1776px; margin: 0 auto; padding-top: 36px; line-height: 38.400px; letter-spacing: -.15px; }
h1 { margin: 0 0 29.600px; font-size: 50.500px; line-height: 61px; font-weight: 450; letter-spacing: -2.700px; word-spacing: 2px; color: #22a7e8; }
.group { margin-bottom: 25.600px; }
.group label { display: block; margin-bottom: 12.800px; }
.input { position: relative; height: 60.800px; padding: 10px 19px; border: 2px solid #ced4da; border-radius: 6px; background: #fff; }
.input.focus { border-color: #a0d8f4; box-shadow: 0 0 0 5px #c8e9f8; }
.input.half { width: 864px; }
.caret { display: block; width: 2px; height: 31px; margin: 4px 0 0 1px; background: #495057; }
.bubble { position: absolute; left: 722px; top: 72px; z-index: 2; width: 330px; height: 69px; display: flex; align-items: center; gap: 14px; padding-left: 12px; border: 2px solid #777; border-radius: 6px; background: #fff; box-shadow: 5px 6px 8px rgba(0,0,0,.3); color: #000; font-size: 23px; white-space: nowrap; }
.bubble .tip { position: absolute; left: 14px; top: -14px; width: 28px; height: 15px; }
.actions { display: flex; justify-content: flex-end; gap: 28px; text-align: center; line-height: 58px; }
.cancel { width: 124px; height: 60px; border: 2px solid #e05206; border-radius: 6px; color: #e05206; }
.save { width: 202px; height: 60px; border-radius: 6px; background: #73a441; color: #fff; line-height: 61px; }
footer { display: flex; justify-content: space-between; color: #868e96; }

/* dock */
.desktop { background: linear-gradient(#335c69, #3d8190); }
.dock { position: relative; z-index: 3; display: flex; width: 2451px; height: 90px; margin-left: 214px; padding-left: 6px; border-radius: 10px 10px 0 0; box-shadow: 0 0 80px rgba(0,0,0,.14); background: linear-gradient(90deg, #5fa3b2, #66abbb 22%, #66b0bf 38%, #719f80 45.500%, #6ca89f 50%, #72a384 55.500%, #68afb8 61%, #63adba 80%, #5fa7b3); }
.app { position: relative; width: 72px; padding: 10px 4px; }
.app svg { width: 64px; height: 64px; overflow: visible; }
.run::after { content: ""; position: absolute; left: 32px; top: 78px; width: 8px; height: 8px; border-radius: 50%; background: #07303a; }
.badge { position: absolute; left: 47px; top: 9px; width: 25px; height: 25px; border-radius: 50%; background: #f5413b; color: #fff; font: 14px/25px Inter, sans-serif; text-align: center; }
.sep { width: 2px; height: 66px; margin: 12px 14px 0 16px; background: #2f7482; }
.sep.short { height: 42px; margin: 24px 14px 0 16px; background: #508377; }
.mini { position: relative; width: 72px; padding: 19px 4px; }
.mini svg { position: absolute; right: 4px; top: 51px; width: 22px; height: 22px; overflow: visible; }
.shot { width: 64px; height: 41px; margin-top: 3px; }
.s1 { border-top: 3px solid #8fcbd8; background: linear-gradient(90deg, #e3e6e9 15px, #fff 15px); }
.s2 { height: 46px; margin-top: 0; border-top: 3px solid #4a6ba6; background: repeating-linear-gradient(#fff 0 2px, #cdc6c7 2px 3px) 15px 8px / 34px 100% no-repeat, #d9d9d9; }
.s3 { height: 36px; margin-top: 5px; background: linear-gradient(90deg, #eee 16px, transparent 16px), repeating-linear-gradient(#fff 0 4px, #e9e9e9 4px 5px); }
.s4 { height: 37px; margin-top: 4px; border-top: 5px solid #bbb; background: linear-gradient(90deg, #ccd0d2 11px, transparent 11px), linear-gradient(#fff 12px, #c5c9cb 12px 20px, #eee 20px); }
.s5 { height: 42px; margin-top: 2px; border-top: 3px solid #ccc; background: linear-gradient(90deg, #e4e6e5 12px, transparent 12px), repeating-linear-gradient(#fff 0 5px, #e0e4dc 5px 6px); }
.trash { margin-left: 0; }
```
